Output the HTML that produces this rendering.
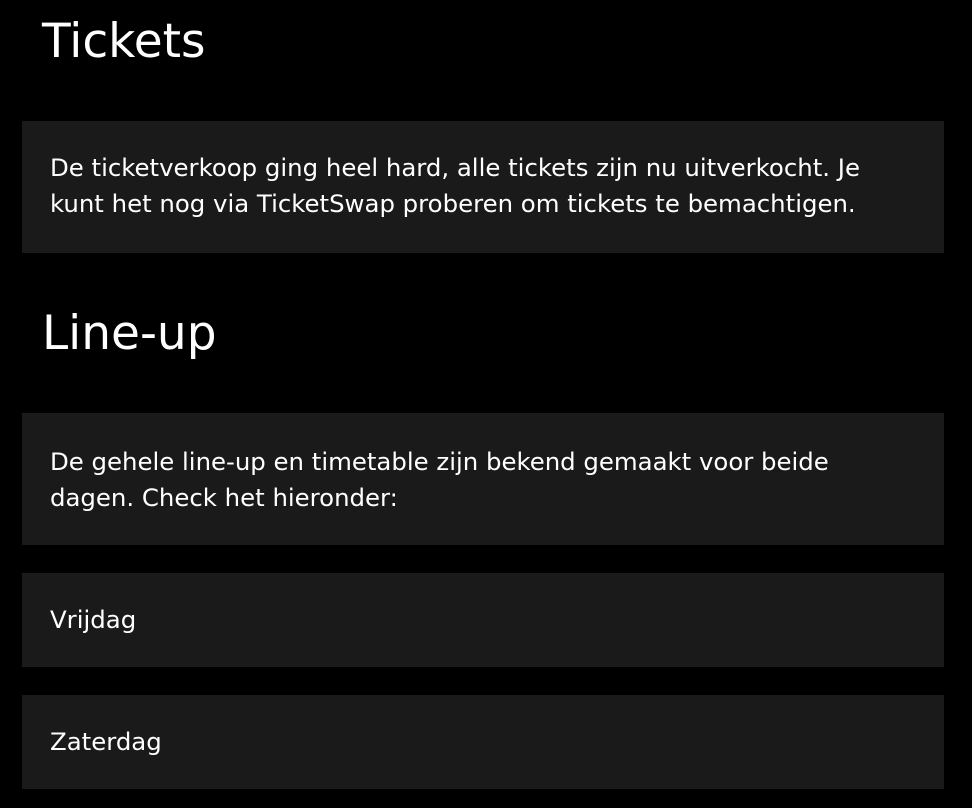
<!DOCTYPE html>
<html><head><style>
body{margin:0;background:#000;width:972px;height:808px;position:relative;overflow:hidden;font-family:"DejaVu Sans",sans-serif;color:#fff}
h1{position:absolute;left:42px;margin:0;font-weight:normal;font-size:47px;line-height:46px}
.box{position:absolute;left:22px;width:922px;background:#1a1a1a}
.box p{position:absolute;left:28px;margin:0;font-size:24.4px;line-height:36px;white-space:nowrap}
</style></head><body>
<h1 style="top:19px">Tickets</h1>
<div class="box" style="top:121px;height:132px"><p style="top:29px">De ticketverkoop ging heel hard, alle tickets zijn nu uitverkocht. Je<br>kunt het nog via TicketSwap proberen om tickets te bemachtigen.</p></div>
<h1 style="top:311px">Line-up</h1>
<div class="box" style="top:413px;height:132px"><p style="top:31px">De gehele line-up en timetable zijn bekend gemaakt voor beide<br>dagen. Check het hieronder:</p></div>
<div class="box" style="top:573px;height:94px"><p style="top:29px">Vrijdag</p></div>
<div class="box" style="top:695px;height:94px"><p style="top:29px">Zaterdag</p></div>
</body></html>
